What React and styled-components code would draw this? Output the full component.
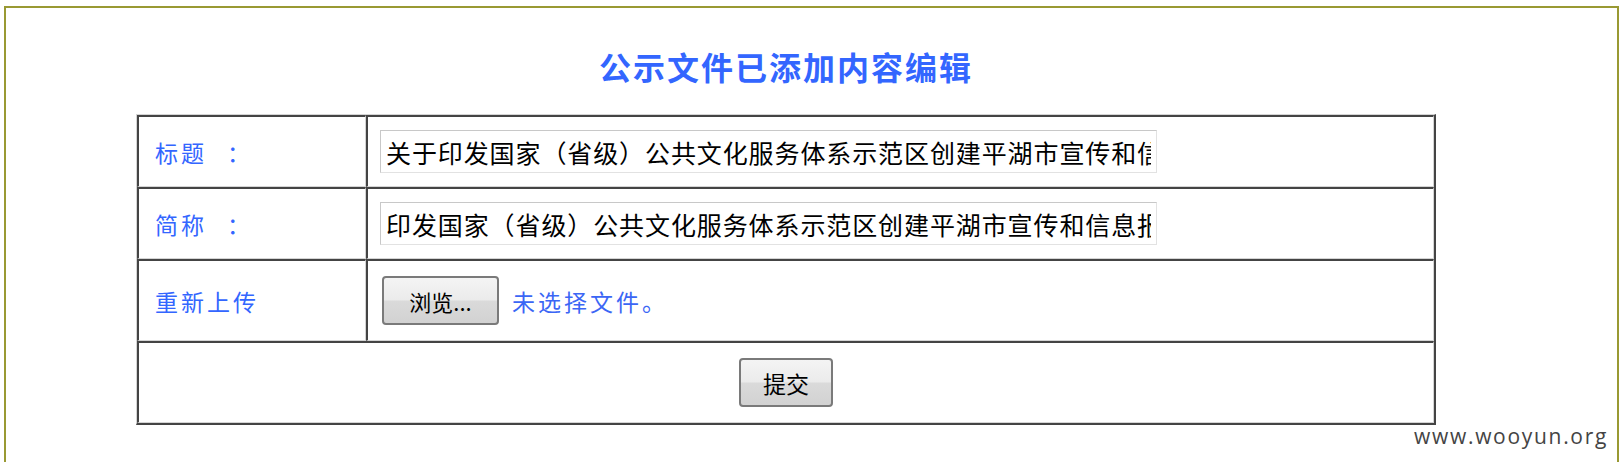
import React from 'react';
import styled, { createGlobalStyle } from 'styled-components';

const GlobalStyle = createGlobalStyle`
  html, body {
    margin: 0;
    padding: 0;
    background: #ffffff;
    overflow: hidden;
  }
  body {
    font-family: "Noto Sans CJK SC", "Noto Sans", sans-serif;
  }
`;

const Sheet = styled.div`
  box-sizing: border-box;
  width: 1615px;
  height: 456px;
  margin: 6px 0 0 4px;
  padding: 38px 0 0 130px;
  border: 2px solid #999933;
  border-bottom: none;
  background: #ffffff;
`;

const Column = styled.div`
  width: 1300px;
`;

const Title = styled.h1`
  margin: 0 0 28px;
  font-size: 32px;
  line-height: 40px;
  font-weight: bold;
  letter-spacing: 2px;
  text-align: center;
  color: #3366ff;
`;

const Grid = styled.table`
  width: 1300px;
  border-collapse: separate;
  border-spacing: 0;
  border-style: solid;
  border-width: 1px 2px 2px 1px;
  border-color: #d4d4d4 #444444 #444444 #d4d4d4;
  table-layout: fixed;
`;

const Cell = styled.td`
  box-sizing: border-box;
  height: ${p => p.$h}px;
  padding: ${p => (p.$center ? '0' : p.$label ? '0 0 0 16px' : '0 0 0 12px')};
  border-style: solid;
  border-width: 2px 1px 1px 2px;
  border-color: #444444 #d4d4d4 #d4d4d4 #444444;
  text-align: ${p => (p.$center ? 'center' : 'left')};
  vertical-align: middle;
`;

const Label = styled.span`
  font-size: 23px;
  letter-spacing: 3px;
  color: #3366ff;
`;

const Colon = styled.span`
  margin-left: 20px;
`;

const TextField = styled.input`
  box-sizing: border-box;
  display: block;
  width: 777px;
  height: 43px;
  margin: 0;
  padding: 0 5px;
  border: 1px solid #c8c8c8;
  border-bottom-color: #e2e2e2;
  border-right-color: #e2e2e2;
  font-family: "Noto Sans CJK SC", sans-serif;
  font-size: 25px;
  letter-spacing: 0.9px;
  color: #000000;
  background: #ffffff;
  outline: none;
`;

const FileRow = styled.div`
  display: flex;
  align-items: center;
  gap: 13px;
  margin-left: 2px;
`;

const GrayButton = styled.button`
  box-sizing: border-box;
  width: ${p => p.$w}px;
  height: 49px;
  padding: 0;
  border: 2px solid #7a7a7a;
  border-radius: 4px;
  background: linear-gradient(#f4f4f4 0%, #ebebeb 48%, #dadada 52%, #d2d2d2 100%);
  font-family: "Noto Sans CJK SC", sans-serif;
  font-size: ${p => p.$size}px;
  color: #000000;
  cursor: pointer;
`;

const NoFile = styled.span`
  font-size: 23px;
  letter-spacing: 3px;
  color: #3b66f5;
`;

const Watermark = styled.div`
  position: absolute;
  left: 1414px;
  top: 423px;
  font-family: "Open Sans", "DejaVu Sans", sans-serif;
  font-size: 21px;
  line-height: 26px;
  letter-spacing: 1.7px;
  color: #444444;
`;

const rows = [
  {
    label: '标题',
    value: '关于印发国家（省级）公共文化服务体系示范区创建平湖市宣传和信息报送工作方案的通知',
  },
  {
    label: '简称',
    value: '印发国家（省级）公共文化服务体系示范区创建平湖市宣传和信息报送工作方案',
  },
];

export default function App() {
  return (
    <>
      <GlobalStyle />
      <Sheet>
        <Column>
          <Title>公示文件已添加内容编辑</Title>
          <Grid>
            <colgroup>
              <col style={{ width: 229 }} />
              <col />
            </colgroup>
            <tbody>
              {rows.map(r => (
                <tr key={r.label}>
                  <Cell $label $h={72}>
                    <Label>
                      {r.label}
                      <Colon>：</Colon>
                    </Label>
                  </Cell>
                  <Cell $h={72}>
                    <TextField defaultValue={r.value} />
                  </Cell>
                </tr>
              ))}
              <tr>
                <Cell $label $h={82}>
                  <Label>重新上传</Label>
                </Cell>
                <Cell $h={82}>
                  <FileRow>
                    <GrayButton $w={117} $size={22}>浏览...</GrayButton>
                    <NoFile>未选择文件。</NoFile>
                  </FileRow>
                </Cell>
              </tr>
              <tr>
                <Cell colSpan={2} $center $h={82}>
                  <GrayButton $w={94} $size={23}>提交</GrayButton>
                </Cell>
              </tr>
            </tbody>
          </Grid>
        </Column>
      </Sheet>
      <Watermark>www.wooyun.org</Watermark>
    </>
  );
}
